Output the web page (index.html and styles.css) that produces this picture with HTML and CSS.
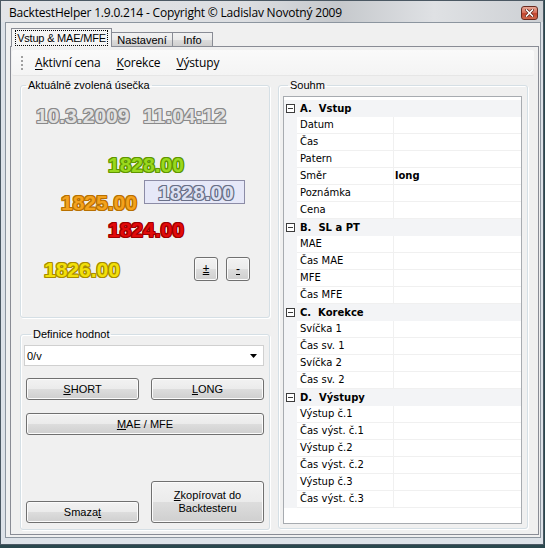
FILE: index.html
```html
<!DOCTYPE html>
<html>
<head>
<meta charset="utf-8">
<link rel="stylesheet" href="styles.css">
</head>
<body>
<div class="window">
  <div class="titlebar">
    <span class="title">BacktestHelper 1.9.0.214 - Copyright © Ladislav Novotný 2009</span>
    <span class="close">
      <svg width="9" height="8" viewBox="0 0 9 8"><path d="M1.5 1 L7.5 7 M7.5 1 L1.5 7" stroke="#5a1e14" stroke-width="3" stroke-linecap="square"/><path d="M1.5 1 L7.5 7 M7.5 1 L1.5 7" stroke="#ffffff" stroke-width="1.6" stroke-linecap="square"/></svg>
    </span>
  </div>
  <div class="client">
    <div class="tabs">
      <div class="tab active"><span class="focus">Vstup &amp; MAE/MFE</span></div>
      <div class="tab t2">Nastavení</div>
      <div class="tab t3">Info</div>
    </div>
    <div class="page">
      <div class="toolbar">
        <svg class="grip" width="3" height="14" viewBox="0 0 3 14">
          <rect x="0" y="0" width="2" height="2" fill="#a0a0a0"/>
          <rect x="0" y="4" width="2" height="2" fill="#a0a0a0"/>
          <rect x="0" y="8" width="2" height="2" fill="#a0a0a0"/>
          <rect x="0" y="12" width="2" height="2" fill="#a0a0a0"/>
        </svg>
        <span class="tb-item"><u>A</u>ktivní cena</span>
        <span class="tb-item"><u>K</u>orekce</span>
        <span class="tb-item"><u>V</u>ýstupy</span>
      </div>
      <div class="content">
        <div class="left">
          <fieldset class="group g1">
            <legend>Aktuálně zvolená úsečka</legend>
            <div class="row r-date">
              <span class="num gray w-date">10.3.2009</span>
              <span class="num gray">11:04:12</span>
            </div>
            <div class="row r-green"><span class="num green">1828.00</span></div>
            <div class="row r-box">
              <span class="num orange w-orange">1825.00</span>
              <span class="pricebox"><span class="num blue">1828.00</span></span>
            </div>
            <div class="row r-red"><span class="num red">1824.00</span></div>
            <div class="row r-yellow">
              <span class="num yellow w-yellow">1826.00</span>
              <span class="btn small"><u>±</u></span>
              <span class="btn small"><u>-</u></span>
            </div>
          </fieldset>
          <fieldset class="group g2">
            <legend>Definice hodnot</legend>
            <div class="g2-body">
              <div class="combo">
                <span>0/v</span>
                <svg width="7" height="4" viewBox="0 0 7 4"><path d="M0 0 H7 L3.5 4 Z" fill="#000"/></svg>
              </div>
              <div class="btn-row r-sl">
                <span class="btn half"><u>S</u>HORT</span>
                <span class="btn half"><u>L</u>ONG</span>
              </div>
              <span class="btn wide"><u>M</u>AE / MFE</span>
              <div class="btn-row r-bottom">
                <span class="btn half">Smaza<u>t</u></span>
                <span class="btn half tall"><span><u>Z</u>kopírovat do<br>Backtesteru</span></span>
              </div>
            </div>
          </fieldset>
        </div>
        <fieldset class="group g3">
          <legend>Souhm</legend>
          <div class="pgrid">
            <div class="cat"><span class="minus"></span><span class="cat-name">A.&nbsp; Vstup</span></div>
            <div class="prop"><span class="pname">Datum</span><span class="pval"></span></div>
            <div class="prop"><span class="pname">Čas</span><span class="pval"></span></div>
            <div class="prop"><span class="pname">Patern</span><span class="pval"></span></div>
            <div class="prop"><span class="pname">Směr</span><span class="pval bold">long</span></div>
            <div class="prop"><span class="pname">Poznámka</span><span class="pval"></span></div>
            <div class="prop"><span class="pname">Cena</span><span class="pval"></span></div>
            <div class="cat"><span class="minus"></span><span class="cat-name">B.&nbsp; SL a PT</span></div>
            <div class="prop"><span class="pname">MAE</span><span class="pval"></span></div>
            <div class="prop"><span class="pname">Čas MAE</span><span class="pval"></span></div>
            <div class="prop"><span class="pname">MFE</span><span class="pval"></span></div>
            <div class="prop"><span class="pname">Čas MFE</span><span class="pval"></span></div>
            <div class="cat"><span class="minus"></span><span class="cat-name">C.&nbsp; Korekce</span></div>
            <div class="prop"><span class="pname">Svíčka 1</span><span class="pval"></span></div>
            <div class="prop"><span class="pname">Čas sv. 1</span><span class="pval"></span></div>
            <div class="prop"><span class="pname">Svíčka 2</span><span class="pval"></span></div>
            <div class="prop"><span class="pname">Čas sv. 2</span><span class="pval"></span></div>
            <div class="cat"><span class="minus"></span><span class="cat-name">D.&nbsp; Výstupy</span></div>
            <div class="prop"><span class="pname">Výstup č.1</span><span class="pval"></span></div>
            <div class="prop"><span class="pname">Čas výst. č.1</span><span class="pval"></span></div>
            <div class="prop"><span class="pname">Výstup č.2</span><span class="pval"></span></div>
            <div class="prop"><span class="pname">Čas výst. č.2</span><span class="pval"></span></div>
            <div class="prop"><span class="pname">Výstup č.3</span><span class="pval"></span></div>
            <div class="prop"><span class="pname">Čas výst. č.3</span><span class="pval"></span></div>
          </div>
        </fieldset>
      </div>
    </div>
  </div>
</div>
</body>
</html>
```

FILE: styles.css
```css
* { box-sizing: border-box; }
html, body { margin: 0; padding: 0; }
body {
  background: #2a474d;
  width: 545px;
  height: 548px;
  overflow: hidden;
  font-family: "Liberation Sans", Arial, sans-serif;
  font-size: 11px;
  color: #000;
}
.window {
  width: 544px;
  height: 545px;
  border: 1px solid #4b5863;
  background: #dde2e8;
  display: flex;
  flex-direction: column;
}
.titlebar {
  height: 21px;
  flex: none;
  display: flex;
  align-items: flex-start;
  justify-content: space-between;
  padding: 0 5px 0 8px;
  background: linear-gradient(to right, #e2e4e7 0%, #dcdee1 45%, #c5c8cc 62%, #dfe1e4 80%, #cdd0d4 100%);
}
.title {
  font-family: "Open Sans", sans-serif;
  font-size: 12px;
  line-height: 16px;
  margin-top: 4px;
  color: #000;
  letter-spacing: -0.2px;
}
.close {
  margin-top: 5px;
  width: 17px;
  height: 14px;
  border: 1px solid #6a2a20;
  border-radius: 3px;
  background: linear-gradient(#e8a897 0%, #d8735f 45%, #c2452e 55%, #d06a4e 100%);
  display: flex;
  align-items: center;
  justify-content: center;
}
.close svg { display: block; }
.client {
  flex: 1;
  margin: 0 2px 6px 4px;
  border: 1px solid #8c959f;
  background: #f0f0f0;
  padding: 5px 1px 2px 4px;
  display: flex;
  flex-direction: column;
}
.tabs {
  display: flex;
  height: 18px;
  padding-left: 1px;
  align-items: flex-end;
}
.tab {
  height: 14px;
  border: 1px solid #898c95;
  border-bottom: none;
  background: linear-gradient(#f2f2f2 0%, #ebebeb 50%, #dddddd 51%, #cfcfcf 100%);
  display: flex;
  align-items: center;
  justify-content: center;
  padding-top: 1px;
}
.tab.active {
  height: 19px;
  width: 101px;
  margin-bottom: -1px;
  background: #f4f4f4;
  position: relative;
  z-index: 1;
  align-items: flex-start;
  padding-top: 1px;
}
.tab.t2 { width: 61px; border-left: none; }
.tab.t3 { width: 40px; border-left: none; }
.focus {
  border: 1px dotted #000;
  padding: 0 1px;
  line-height: 14px;
  height: 16px;
  letter-spacing: -0.2px;
}
.page {
  flex: 1;
  border: 1px solid #898c95;
  background: #f0f0f0;
  padding: 3px 4px 0 1px;
  display: flex;
  flex-direction: column;
}
.toolbar {
  height: 26px;
  flex: none;
  background: linear-gradient(#fafafa, #f4f4f4);
  border-bottom: 1px solid #e6e6e6;
  border-radius: 2px;
  display: flex;
  align-items: center;
  padding-left: 9px;
  font-family: "Open Sans", sans-serif;
  font-size: 12px;
  letter-spacing: -0.15px;
}
.grip { display: block; margin-right: 11px; margin-top: 1px; }
.tb-item { margin-right: 16px; }
.tb-item u { text-underline-offset: 2px; }
.content {
  display: flex;
  padding: 3px 0 0 8px;
  gap: 8px;
}
.left {
  width: 250px;
  display: flex;
  flex-direction: column;
}
fieldset.group {
  margin: 0;
  padding: 0;
  border: 1px solid #d5dfe5;
  border-radius: 3px;
  box-shadow: inset 1px 1px 0 #fff, 1px 1px 0 #fff;
  min-width: 0;
}
fieldset.group legend {
  font-size: 11px;
  font-weight: normal;
  line-height: 13px;
  padding: 0 2px;
  margin-left: 5px;
  height: 13px;
}
fieldset.g1 {
  height: 239px;
}
fieldset.g2 {
  height: 202px;
  margin-top: 10px;
  padding: 0 5px 6px 5px;
}
.g2-body {
  height: 182px;
  display: flex;
  flex-direction: column;
}
fieldset.g3 {
  width: 250px;
  height: 450px;
  padding: 0 0 0 4px;
}
.row { display: flex; align-items: flex-start; }
.num {
  font-family: "Liberation Sans", Arial, sans-serif;
  font-weight: bold;
  font-size: 21px;
  line-height: 21px;
  display: inline-block;
}
.gray {
  color: #e2e2e2;
  text-shadow: -1px -1px 0 #8a8a8a, 1px -1px 0 #8a8a8a, -1px 1px 0 #8a8a8a, 1px 1px 0 #8a8a8a, 0 -1px 0 #8a8a8a, 0 1px 0 #8a8a8a, -1px 0 0 #8a8a8a, 1px 0 0 #8a8a8a;
}
.green {
  color: #9ad81e;
  text-shadow: -1px -1px 0 #5e9600, 1px -1px 0 #5e9600, -1px 1px 0 #5e9600, 1px 1px 0 #5e9600, 0 -1px 0 #5e9600, 0 1px 0 #5e9600, -1px 0 0 #5e9600, 1px 0 0 #5e9600;
}
.orange {
  color: #f3a21e;
  text-shadow: -1px -1px 0 #b87000, 1px -1px 0 #b87000, -1px 1px 0 #b87000, 1px 1px 0 #b87000, 0 -1px 0 #b87000, 0 1px 0 #b87000, -1px 0 0 #b87000, 1px 0 0 #b87000;
}
.red {
  color: #e20a0a;
  text-shadow: -1px -1px 0 #9c0000, 1px -1px 0 #9c0000, -1px 1px 0 #9c0000, 1px 1px 0 #9c0000, 0 -1px 0 #9c0000, 0 1px 0 #9c0000, -1px 0 0 #9c0000, 1px 0 0 #9c0000;
}
.yellow {
  color: #f2e00a;
  text-shadow: -1px -1px 0 #a88c00, 1px -1px 0 #a88c00, -1px 1px 0 #a88c00, 1px 1px 0 #a88c00, 0 -1px 0 #a88c00, 0 1px 0 #a88c00, -1px 0 0 #a88c00, 1px 0 0 #a88c00;
}
.blue {
  color: #dde1f2;
  text-shadow: -1px -1px 0 #6a7088, 1px -1px 0 #6a7088, -1px 1px 0 #6a7088, 1px 1px 0 #6a7088, 0 -1px 0 #6a7088, 0 1px 0 #6a7088, -1px 0 0 #6a7088, 1px 0 0 #6a7088;
}
.r-date { margin: 13px 0 0 15px; }
.w-date { width: 107px; }
.r-green { margin: 28px 0 0 87px; }
.r-box { margin: 5px 0 0 40px; }
.w-orange { width: 83px; margin-top: 12px; }
.pricebox {
  width: 101px;
  height: 24px;
  border: 1px solid #8c8ca6;
  background: #e6e8f8;
  padding: 1px 0 0 13px;
}
.r-red { margin: 6px 0 0 87px; }
.r-yellow { margin: 17px 0 0 23px; }
.w-yellow { width: 150px; margin-top: 2px; }
.btn {
  display: flex;
  align-items: center;
  justify-content: center;
  border: 1px solid #707070;
  border-radius: 3px;
  background: linear-gradient(#f2f2f2 0%, #ebebeb 50%, #dddddd 51%, #cfcfcf 100%);
  box-shadow: inset 0 0 0 1px #fbfbfb;
  font-family: "Liberation Sans", Arial, sans-serif;
  font-size: 11px;
  font-weight: normal;
  line-height: 13px;
  text-align: center;
  color: #000;
}
.btn u { text-underline-offset: 1px; }
.btn.small { width: 24px; height: 24px; margin-right: 8px; font-size: 12px; }
.combo {
  margin: 4px 0 0 -2px;
  width: 240px;
  height: 21px;
  flex: none;
  background: #fff;
  border: 1px solid #d0d0d0;
  display: flex;
  align-items: center;
  justify-content: space-between;
  padding: 0 6px 0 2px;
}
.combo svg { display: block; }
.btn-row { display: flex; justify-content: space-between; }
.r-sl { margin-top: 12px; }
.btn.half { width: 113px; height: 22px; }
.btn.wide { width: 238px; height: 22px; margin-top: 13px; flex: none; }
.r-bottom { margin-top: auto; align-items: flex-end; }
.btn.tall { height: 42px; }
.pgrid {
  margin-top: 4px;
  width: 239px;
  height: 428px;
  border: 1px solid #a7abb0;
  background: #fff;
  padding-top: 3px;
  font-family: "DejaVu Sans", sans-serif;
  font-size: 10px;
}
.cat {
  height: 17px;
  background: #f3f4f6;
  display: flex;
  align-items: center;
  padding-left: 2px;
}
.minus {
  width: 9px;
  height: 9px;
  border: 1px solid #3c3c3c;
  background: linear-gradient(#3c3c3c, #3c3c3c) center / 5px 1px no-repeat, #fff;
  margin-right: 5px;
}
.cat-name { font-weight: bold; }
.prop {
  height: 17px;
  display: flex;
  border-left: 13px solid #f3f4f6;
}
.pname {
  width: 97px;
  padding-left: 3px;
  line-height: 16px;
  border-bottom: 1px solid #f0f0f0;
  border-right: 1px solid #f0f0f0;
}
.pval {
  flex: 1;
  padding-left: 1px;
  line-height: 16px;
  border-bottom: 1px solid #f0f0f0;
}
.bold { font-weight: bold; }
```
